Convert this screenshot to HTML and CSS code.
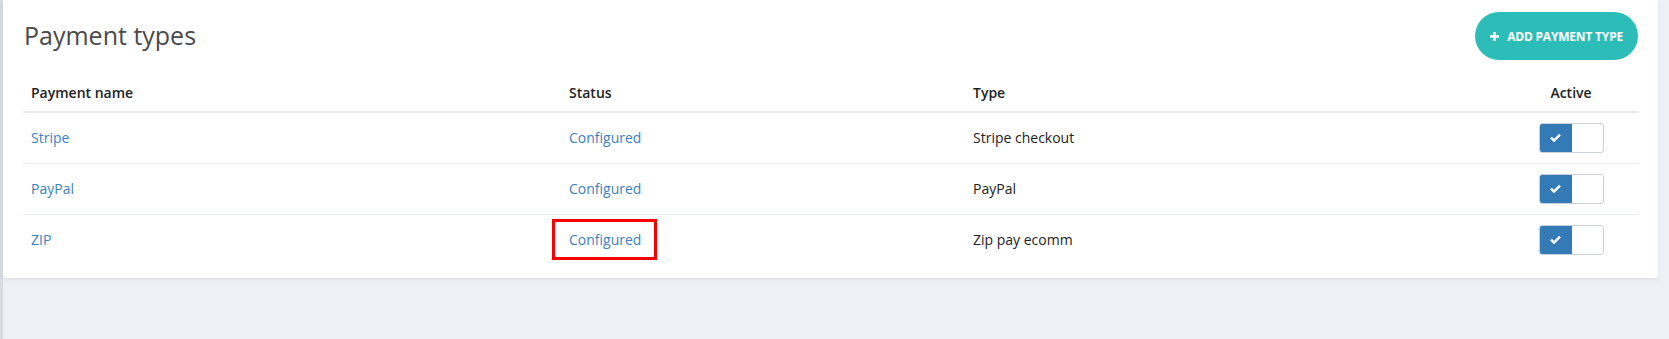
FILE: index.html
```html
<!DOCTYPE html>
<html lang="en">
<head>
    <meta charset="UTF-8">
    <meta name="viewport" content="width=device-width, initial-scale=1.0">
    <title>Payment types</title>
    <link rel="stylesheet" href="styles.css">
</head>
<body>
    <!-- Sidebar edge -->
    <div class="side-edge"></div>

    <main class="main">
        <div class="card">
            <!-- Card Header -->
            <div class="card-header">
                <h1>Payment types</h1>
                <button class="add-btn">
                    <svg class="plus" width="9" height="9" viewBox="0 0 9 9"><path d="M3.3 0h2.4v3.3H9v2.4H5.7V9H3.3V5.7H0V3.3h3.3z" fill="#fff"/></svg>
                    ADD PAYMENT TYPE
                </button>
            </div>

            <!-- Payment Table -->
            <table class="pay-table">
                <thead>
                    <tr>
                        <th class="col-name">Payment name</th>
                        <th class="col-status">Status</th>
                        <th class="col-type">Type</th>
                        <th class="col-active">Active</th>
                    </tr>
                </thead>
                <tbody>
                    <tr>
                        <td><a href="#">Stripe</a></td>
                        <td><a href="#">Configured</a></td>
                        <td>Stripe checkout</td>
                        <td class="col-active"><span class="toggle"><span class="toggle-on"><svg width="11" height="9" viewBox="0 0 11 9"><path d="M1 4.6l3 3L10 1.6" stroke="#fff" stroke-width="2.4" fill="none"/></svg></span></span></td>
                    </tr>
                    <tr>
                        <td><a href="#">PayPal</a></td>
                        <td><a href="#">Configured</a></td>
                        <td>PayPal</td>
                        <td class="col-active"><span class="toggle"><span class="toggle-on"><svg width="11" height="9" viewBox="0 0 11 9"><path d="M1 4.6l3 3L10 1.6" stroke="#fff" stroke-width="2.4" fill="none"/></svg></span></span></td>
                    </tr>
                    <tr>
                        <td><a href="#">ZIP</a></td>
                        <td><a href="#" class="marked">Configured</a></td>
                        <td>Zip pay ecomm</td>
                        <td class="col-active"><span class="toggle"><span class="toggle-on"><svg width="11" height="9" viewBox="0 0 11 9"><path d="M1 4.6l3 3L10 1.6" stroke="#fff" stroke-width="2.4" fill="none"/></svg></span></span></td>
                    </tr>
                </tbody>
            </table>
        </div>
    </main>
</body>
</html>
```

FILE: styles.css
```css
/* General Styles */
* {
    margin: 0;
    padding: 0;
    box-sizing: border-box;
    font-family: "Open Sans", Arial, sans-serif;
}
body {
    background-color: #edf0f4;
    display: flex;
    height: 100vh;
    overflow: hidden;
}
.side-edge {
    width: 3px;
    background-color: #d8dbe0;
}
.main {
    flex: 1;
    padding-right: 11px;
}

/* Card */
.card {
    background-color: #fff;
    padding: 12px 20px 13px 20px;
    border-radius: 0 0 3px 3px;
    box-shadow: 0 2px 4px rgba(0, 0, 0, 0.06);
}
.card-header {
    display: flex;
    justify-content: space-between;
    align-items: center;
    height: 48px;
}
.card-header h1 {
    font-size: 25px;
    font-weight: 400;
    color: #4a4a4a;
    margin-left: 1px;
    margin-top: -2px;
}
.add-btn {
    display: flex;
    align-items: center;
    gap: 8px;
    height: 48px;
    padding: 0 15px;
    border: none;
    border-radius: 24px;
    background-color: #2dbdb8;
    color: #fff;
    font-size: 12px;
    font-weight: 700;
    letter-spacing: -0.2px;
    cursor: pointer;
}

/* Table */
.pay-table {
    width: 100%;
    table-layout: fixed;
    border-collapse: collapse;
    font-size: 14px;
    color: #222;
}
.pay-table th {
    text-align: left;
    font-weight: 600;
    height: 52px;
    vertical-align: bottom;
    padding: 0 8px 9px 8px;
    border-bottom: 2px solid #e5eaef;
}
.pay-table td {
    height: 51px;
    padding: 0 8px;
    border-bottom: 1px solid #e5eaef;
    vertical-align: middle;
}
.pay-table tbody tr:last-child td {
    border-bottom: none;
}
.pay-table a {
    color: #3b7fc0;
    text-decoration: none;
}
.col-name { width: 538px; }
.col-status { width: 404px; }
.pay-table .col-active {
    text-align: center;
    width: 134px;
    padding-right: 0;
    padding-left: 0;
}

/* Highlight box */
.marked {
    display: inline-block;
    padding: 8px 13px 8px 14px;
    margin-left: -17px;
    border: 3px solid #f80000;
}

/* Toggle */
.toggle {
    display: inline-flex;
    width: 65px;
    height: 30px;
    border: 1px solid #c9d1dc;
    border-radius: 3px;
    overflow: hidden;
    vertical-align: middle;
}
.toggle-on {
    width: 32px;
    background-color: #337ab7;
    display: flex;
    align-items: center;
    justify-content: center;
}
```
